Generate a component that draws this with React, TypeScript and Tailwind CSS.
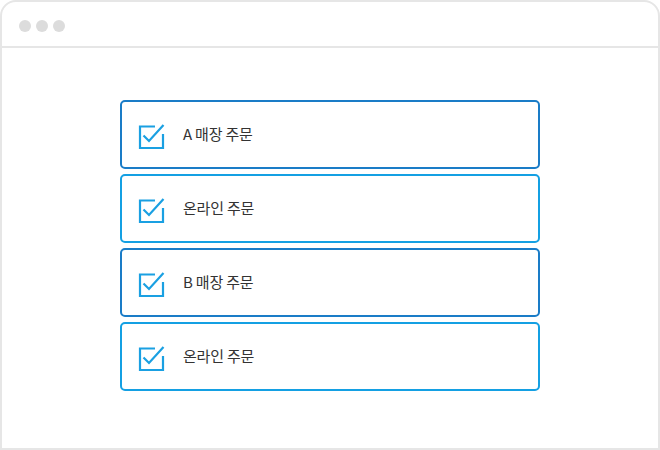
const items = [
  { label: "A 매장 주문", dark: true },
  { label: "온라인 주문", dark: false },
  { label: "B 매장 주문", dark: true },
  { label: "온라인 주문", dark: false },
];

function CheckIcon() {
  return (
    <svg width="30" height="30" viewBox="0 0 30 30" fill="none" className="shrink-0">
      <path d="M25 14v14H2V6.5h15" stroke="#1aa0e2" strokeWidth="2.2" />
      <path d="M5.5 15.5l5.5 5.5L25.5 5" stroke="#1aa0e2" strokeWidth="2.2" />
    </svg>
  );
}

export default function App() {
  return (
    <div className="w-[660px] h-[450px] bg-white" style={{ fontFamily: '"Noto Sans CJK KR", "Noto Sans", sans-serif' }}>
      <div className="w-full h-full border-2 border-[#e6e6e6] rounded-t-[16px] flex flex-col">
        {/* title bar */}
        <div className="h-[46px] border-b-2 border-[#e6e6e6] flex items-center gap-[5px] pl-[17px] pt-[4px] shrink-0">
          <span className="w-[12px] h-[12px] rounded-full bg-[#dcdcdc]" />
          <span className="w-[12px] h-[12px] rounded-full bg-[#dcdcdc]" />
          <span className="w-[12px] h-[12px] rounded-full bg-[#dcdcdc]" />
        </div>

        <div className="flex flex-col gap-[5px] pt-[52px] pl-[118px]">
          {items.map((it, i) => (
            <div
              key={i}
              className={
                "w-[420px] h-[69px] rounded-[5px] border-2 flex items-center pl-[16px] " +
                (it.dark ? "border-[#1a7cc7]" : "border-[#14a0e3]")
              }
            >
              <CheckIcon />
              <span className="ml-[15px] mt-[-1px] text-[15px] text-[#333333] tracking-[-0.2px]">{it.label}</span>
            </div>
          ))}
        </div>
      </div>
    </div>
  );
}
